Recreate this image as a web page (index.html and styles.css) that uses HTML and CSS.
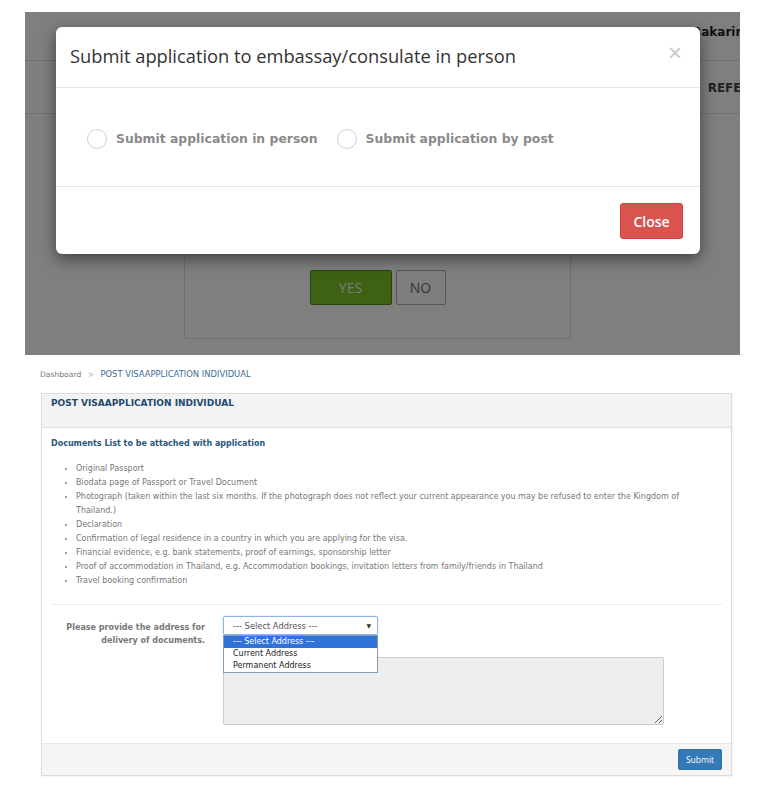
FILE: index.html
```html
<!DOCTYPE html>
<html lang="en">
<head>
    <meta charset="UTF-8">
    <meta name="viewport" content="width=device-width, initial-scale=1.0">
    <title>Post Visa Application</title>
    <link rel="stylesheet" href="styles.css">
</head>
<body>
    <div class="screenshot">
        <div class="page-under">
            <div class="topbar">
                <span class="user-name">Name Bakarin</span>
            </div>
            <div class="menu">
                <span class="menu-item">REFERENCE</span>
            </div>
            <div class="question-box">
                <button type="button" class="btn-yes">YES</button>
                <button type="button" class="btn-no">NO</button>
            </div>
        </div>
        <div class="backdrop"></div>

        <div class="modal">
            <div class="modal-header">
                <h4 class="modal-title">Submit application to embassay/consulate in person</h4>
                <span class="modal-x">&times;</span>
            </div>
            <div class="modal-body">
                <label class="radio-option"><span class="radio-circle"></span>Submit application in person</label>
                <label class="radio-option"><span class="radio-circle"></span>Submit application by post</label>
            </div>
            <div class="modal-footer">
                <button type="button" class="btn-close">Close</button>
            </div>
        </div>
    </div>

    <div class="content">
        <div class="breadcrumb">
            <span>Dashboard</span>
            <span class="crumb-sep">&gt;</span>
            <span class="crumb-active">POST VISAAPPLICATION INDIVIDUAL</span>
        </div>

        <div class="panel">
            <div class="panel-heading">POST VISAAPPLICATION INDIVIDUAL</div>
            <div class="panel-body">
                <h5 class="docs-title">Documents List to be attached with application</h5>
                <ul class="docs-list">
                    <li>Original Passport</li>
                    <li>Biodata page of Passport or Travel Document</li>
                    <li>Photograph (taken within the last six months. If the photograph does not reflect your current appearance you may be refused to enter the Kingdom of Thailand.)</li>
                    <li>Declaration</li>
                    <li>Confirmation of legal residence in a country in which you are applying for the visa.</li>
                    <li>Financial evidence, e.g. bank statements, proof of earnings, sponsorship letter</li>
                    <li>Proof of accommodation in Thailand, e.g. Accommodation bookings, invitation letters from family/friends in Thailand</li>
                    <li>Travel booking confirmation</li>
                </ul>
                <hr class="divider">

                <div class="form-row">
                    <label class="form-label">Please provide the address for delivery of documents.</label>
                    <div class="form-field">
                        <div class="select-box">
                            <span>--- Select Address ---</span>
                            <span class="select-arrow">&#9660;</span>
                            <div class="select-options">
                                <div class="select-option selected">--- Select Address ---</div>
                                <div class="select-option">Current Address</div>
                                <div class="select-option">Permanent Address</div>
                            </div>
                        </div>
                        <textarea class="address-area" readonly></textarea>
                    </div>
                </div>
            </div>
            <div class="panel-footer">
                <button type="submit" class="btn-submit">Submit</button>
            </div>
        </div>
    </div>
</body>
</html>
```

FILE: styles.css
```css
* {
    box-sizing: border-box;
}

body {
    margin: 0;
    background: #fff;
    font-family: 'DejaVu Sans', Verdana, sans-serif;
}

/* ---------- screenshot of the modal ---------- */

.screenshot {
    position: relative;
    width: 715px;
    height: 343px;
    margin: 12px 0 0 25px;
    overflow: hidden;
    background: #fff;
}

.page-under {
    display: flex;
    flex-direction: column;
}

.topbar {
    height: 49px;
    border-bottom: 1px solid #e0e0e0;
    display: flex;
    justify-content: flex-end;
    padding-top: 13px;
}

.user-name {
    font-weight: bold;
    font-size: 12px;
    line-height: 14px;
    color: #222;
    white-space: nowrap;
    margin-right: -4px;
}

.menu {
    height: 53px;
    border-bottom: 1px solid #e0e0e0;
    display: flex;
    justify-content: flex-end;
    padding-top: 20px;
}

.menu-item {
    font-weight: bold;
    font-size: 12px;
    line-height: 14px;
    color: #444;
    margin-right: -46px;
}

.question-box {
    width: 387px;
    height: 187px;
    margin: 38px 0 0 159px;
    border: 1px solid #e0e0e0;
    display: flex;
    justify-content: center;
    align-items: flex-end;
    gap: 4px;
    padding-bottom: 33px;
}

.btn-yes, .btn-no {
    height: 35px;
    font-family: 'Open Sans', sans-serif;
    font-size: 14px;
    border-radius: 2px;
    padding: 0;
}

.btn-yes {
    width: 82px;
    background: #7fc228;
    border: 1px solid #4f8a1c;
    color: #f2fbe8;
}

.btn-no {
    width: 50px;
    background: #fcfcfc;
    border: 1px solid #aaa;
    color: #666;
}

.backdrop {
    position: absolute;
    inset: 0;
    background: rgba(0, 0, 0, 0.5);
}

.modal {
    position: absolute;
    top: 15px;
    left: 31px;
    width: 644px;
    background: #fff;
    border-radius: 6px;
    box-shadow: 0 5px 15px rgba(0, 0, 0, 0.5);
}

.modal-header {
    display: flex;
    justify-content: space-between;
    align-items: center;
    padding: 15px 18px 17px 14px;
    border-bottom: 1px solid #e5e5e5;
}

.modal-title {
    margin: 0;
    font-family: 'Open Sans', sans-serif;
    font-weight: normal;
    font-size: 18.3px;
    line-height: 28px;
    color: #333;
}

.modal-x {
    font-family: 'Liberation Sans', sans-serif;
    font-size: 24px;
    line-height: 20px;
    color: #c8c8c8;
    margin-top: -6px;
}

.modal-body {
    display: flex;
    align-items: center;
    gap: 19px;
    padding: 41px 0 37px 31px;
}

.radio-option {
    display: flex;
    align-items: center;
    gap: 9px;
    font-weight: bold;
    font-size: 12.4px;
    line-height: 20px;
    color: #8a8a8a;
}

.radio-circle {
    width: 20px;
    height: 20px;
    border: 1.5px solid #cfcfcf;
    border-radius: 50%;
    background: #fff;
}

.modal-footer {
    display: flex;
    justify-content: flex-end;
    padding: 16px 17px 15px;
    border-top: 1px solid #e5e5e5;
}

.btn-close {
    width: 63px;
    height: 36px;
    background: #d9534f;
    border: 1px solid #d43f3a;
    border-radius: 3px;
    color: #fff;
    font-family: 'Open Sans', sans-serif;
    font-weight: 600;
    font-size: 14px;
    padding: 0;
}

/* ---------- application page ---------- */

.content {
    padding: 13px 0 20px 40px;
}

.breadcrumb {
    font-size: 7.6px;
    line-height: 12px;
    color: #777;
    white-space: nowrap;
}

.crumb-sep {
    color: #bbb;
    margin: 0 4px;
}

.crumb-active {
    font-size: 8.4px;
    color: #3b6b96;
}

.panel {
    width: 691px;
    margin: 12px 0 0 1px;
    border: 1px solid #dcdcdc;
    box-shadow: 1px 1px 2px rgba(0, 0, 0, 0.06);
}

.panel-heading {
    height: 34px;
    padding: 3px 9px 0;
    background: #f3f3f3;
    border-bottom: 1px solid #e0e0e0;
    font-weight: bold;
    font-size: 9px;
    line-height: 12px;
    color: #24496d;
}

.panel-body {
    padding: 10px 9px 18px 9px;
}

.docs-title {
    margin: 0;
    font-size: 8px;
    line-height: 12px;
    color: #28567c;
}

.docs-list {
    margin: 12px 0 0;
    padding: 0 30px 0 25px;
    font-size: 8px;
    line-height: 14px;
    color: #777;
}

.divider {
    margin: 16px 0 0;
    border: 0;
    border-top: 1px solid #eee;
}

.form-row {
    display: grid;
    grid-template-columns: 154px 1fr;
    column-gap: 18px;
    margin-top: 11px;
}

.form-label {
    padding: 5px 0 0 14px;
    text-align: right;
    font-weight: bold;
    font-size: 8px;
    line-height: 13px;
    color: #777;
}

.select-box {
    position: relative;
    width: 155px;
    height: 19px;
    display: flex;
    align-items: center;
    justify-content: space-between;
    padding: 0 6px 0 9px;
    border: 1px solid #8fb4e3;
    border-radius: 2px;
    box-shadow: 0 0 2px rgba(102, 175, 233, 0.5);
    font-size: 8.3px;
    color: #555;
}

.select-arrow {
    font-size: 6px;
    color: #333;
}

.select-options {
    position: absolute;
    top: 18px;
    left: -1px;
    width: 155px;
    background: #fff;
    border: 1px solid #7f9db9;
    z-index: 2;
}

.select-option {
    height: 12px;
    padding-left: 9px;
    font-size: 8px;
    line-height: 12px;
    color: #222;
}

.select-option.selected {
    background: #3073d6;
    color: #fff;
}

.address-area {
    display: block;
    width: 441px;
    height: 68px;
    margin-top: 22px;
    background: #eee;
    border: 1px solid #ccc;
    border-radius: 2px;
}

.panel-footer {
    display: flex;
    justify-content: flex-end;
    padding: 5px 9px;
    background: #f5f5f5;
    border-top: 1px solid #e8e8e8;
}

.btn-submit {
    width: 44px;
    height: 21px;
    padding: 0;
    background: #337ab7;
    border: 1px solid #2e6da4;
    border-radius: 2px;
    color: #fff;
    font-family: 'Open Sans', sans-serif;
    font-size: 8.5px;
}
```
